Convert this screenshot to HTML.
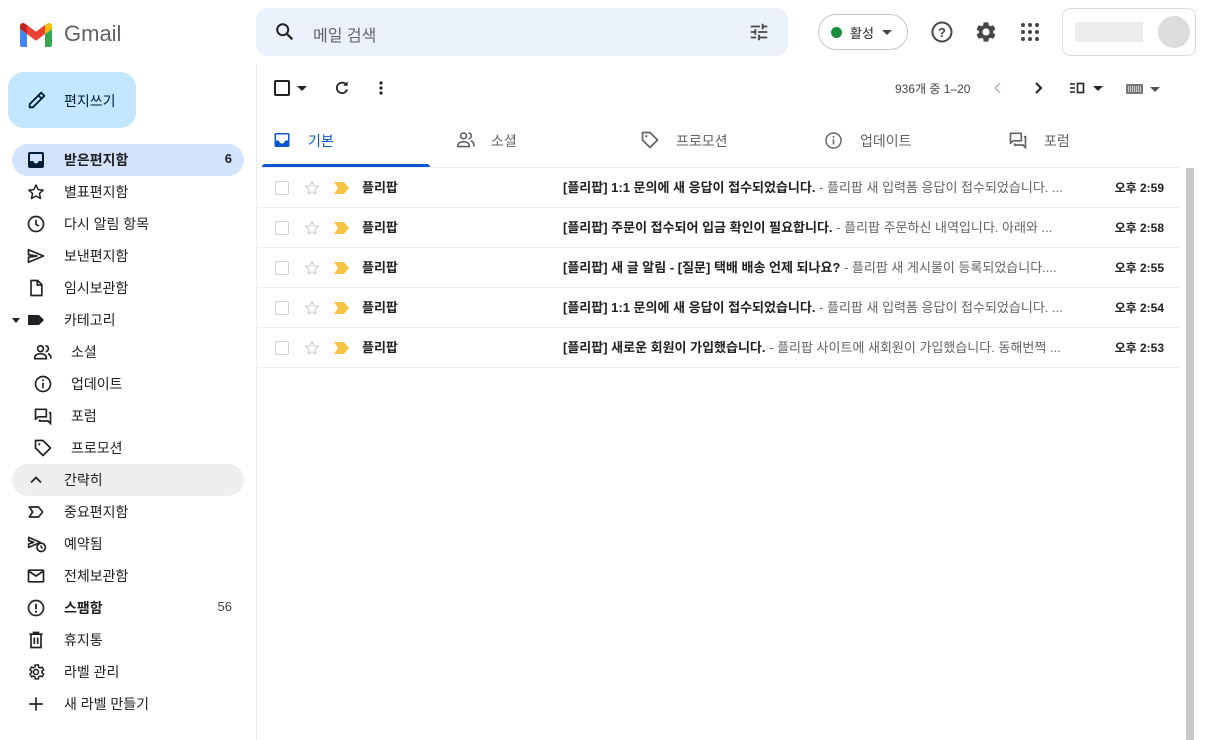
<!DOCTYPE html>
<html><head><meta charset="utf-8"><style>
*{margin:0;padding:0;box-sizing:border-box}
body{width:1212px;height:740px;overflow:hidden;background:#fff;font-family:"Liberation Sans","Noto Sans CJK KR",sans-serif;color:#202124;position:relative}
.a{position:absolute}
svg{display:block}
.nav{position:absolute;left:12px;width:232px;height:32px;border-radius:16px;font-size:14px;color:#202124}
.nav .ic{position:absolute;left:14px;top:6px}
.nav .t{position:absolute;left:52px;top:7px;line-height:18px}
.nav .n{position:absolute;right:12px;top:7px;font-size:13px}
.row{position:absolute;left:257px;width:923px;height:40px;border-bottom:1px solid #eceff1;font-size:13px}
.row .cb{position:absolute;left:18px;top:13px;width:14px;height:14px;border:1.5px solid #d2d2d2;border-radius:2px}
.row .st{position:absolute;left:46px;top:11px}
.row .im{position:absolute;left:77px;top:14px}
.row .snd{position:absolute;left:105px;top:11px;font-weight:bold;line-height:18px}
.row .sub{position:absolute;left:306px;top:11px;line-height:18px;white-space:nowrap}
.row .sub b{color:#202124}
.row .sub span{color:#5f6368}
.row .tm{position:absolute;right:16px;top:11px;font-weight:bold;font-size:12px;line-height:18px}
.tab{position:absolute;top:112px;height:55px;font-size:14px;color:#5f6368}
.tab .t{position:absolute;top:19px}
</style></head><body>

<!-- logo -->
<svg class="a" style="left:20px;top:23px" width="32" height="24" viewBox="0 0 32 24">
<path d="M2 24h5V11L0 6v16c0 1.1.9 2 2 2z" fill="#4285f4"/>
<path d="M25 24h5c1.1 0 2-.9 2-2V6l-7 5z" fill="#34a853"/>
<path d="M25 2v9l7-5V3c0-2.5-2.8-3.9-4.8-2.4z" fill="#fbbc04"/>
<path d="M7 11V2l9 6.8L25 2v9l-9 6.8z" fill="#ea4335"/>
<path d="M0 3v3l7 5V2L4.8.6C2.8-.9 0 .5 0 3z" fill="#c5221f"/>
</svg>
<div class="a" style="left:64px;top:21px;font-size:22px;color:#5f6368;letter-spacing:0">Gmail</div>

<!-- search -->
<div class="a" style="left:256px;top:8px;width:532px;height:48px;background:#eaf1fb;border-radius:12px"></div>
<svg class="a" style="left:274px;top:21px" width="22" height="22" viewBox="0 0 24 24"><circle cx="9.5" cy="9.5" r="6" fill="none" stroke="#202124" stroke-width="2.2"/><path d="M14 14l6 6" stroke="#202124" stroke-width="2.4"/></svg>
<div class="a" style="left:313px;top:22px;font-size:16px;color:#5f6368">메일 검색</div>
<svg class="a" style="left:748px;top:21px" width="22" height="22" viewBox="0 0 24 24" fill="#444746"><path d="M3 17v2h6v-2H3zM3 5v2h10V5H3zm10 16v-2h8v-2h-8v-2h-2v6h2zM7 9v2H3v2h4v2h2V9H7zm14 4v-2H11v2h10zm-6-4h2V7h4V5h-4V3h-2v6z"/></svg>

<!-- status -->
<div class="a" style="left:818px;top:14px;width:90px;height:36px;border:1px solid #c4c7c5;border-radius:18px"></div>
<div class="a" style="left:831px;top:27px;width:11px;height:11px;border-radius:50%;background:#1e8e3e"></div>
<div class="a" style="left:850px;top:23px;font-size:13px">활성</div>
<div class="a" style="left:882px;top:30px;width:0;height:0;border-left:5px solid transparent;border-right:5px solid transparent;border-top:5px solid #444"></div>
<svg class="a" style="left:930px;top:20px" width="24" height="24" viewBox="0 0 24 24"><circle cx="12" cy="12" r="9.5" fill="none" stroke="#444746" stroke-width="2"/><text x="12" y="17" font-size="13" text-anchor="middle" fill="#444746" font-family="Liberation Sans" font-weight="bold">?</text></svg>
<svg class="a" style="left:974px;top:20px" width="24" height="24" viewBox="0 0 24 24"><path fill="#444746" d="M19.14 12.94c.04-.3.06-.61.06-.94 0-.32-.02-.64-.07-.94l2.03-1.58a.49.49 0 00.12-.61l-1.92-3.32a.488.488 0 00-.59-.22l-2.39.96c-.5-.38-1.03-.7-1.62-.94l-.36-2.54a.484.484 0 00-.48-.41h-3.84c-.24 0-.43.17-.47.41l-.36 2.54c-.59.24-1.13.57-1.62.94l-2.39-.96c-.22-.08-.47 0-.59.22L2.74 8.87c-.12.21-.08.47.12.61l2.03 1.58c-.05.3-.09.63-.09.94s.02.64.07.94l-2.03 1.58a.49.49 0 00-.12.61l1.92 3.32c.12.22.37.29.59.22l2.39-.96c.5.38 1.03.7 1.62.94l.36 2.54c.05.24.24.41.48.41h3.84c.24 0 .44-.17.47-.41l.36-2.54c.59-.24 1.13-.56 1.62-.94l2.39.96c.22.08.47 0 .59-.22l1.92-3.32c.12-.22.07-.47-.12-.61l-2.01-1.58zM12 15.6A3.6 3.6 0 1112 8.4a3.6 3.6 0 010 7.2z"/></svg>
<svg class="a" style="left:1019px;top:21px" width="22" height="22" viewBox="0 0 22 22" fill="#444746"><circle cx="4" cy="4" r="2"/><circle cx="11" cy="4" r="2"/><circle cx="18" cy="4" r="2"/><circle cx="4" cy="11" r="2"/><circle cx="11" cy="11" r="2"/><circle cx="18" cy="11" r="2"/><circle cx="4" cy="18" r="2"/><circle cx="11" cy="18" r="2"/><circle cx="18" cy="18" r="2"/></svg>
<div class="a" style="left:1062px;top:8px;width:134px;height:48px;border:1px solid #dadce0;border-radius:8px"></div>
<div class="a" style="left:1075px;top:22px;width:68px;height:20px;background:#ececec"></div>
<div class="a" style="left:1158px;top:16px;width:32px;height:32px;border-radius:50%;background:#dcdcdc"></div>

<!-- compose -->
<div class="a" style="left:8px;top:72px;width:128px;height:56px;background:#c2e7ff;border-radius:16px"></div>
<svg class="a" style="left:26px;top:89px" width="22" height="22" viewBox="0 0 24 24"><path d="M4 20v-3.5L16.5 4l3.5 3.5L7.5 20H4z" fill="none" stroke="#001d35" stroke-width="2" stroke-linejoin="round"/><path d="M13.5 7l3.5 3.5" stroke="#001d35" stroke-width="2"/></svg>
<div class="a" style="left:64px;top:91px;font-size:14px;color:#001d35">편지쓰기</div>

<!-- nav -->
<div class="nav" style="top:144px;background:#d3e3fd;font-weight:bold"><svg class="ic" width="20" height="20" viewBox="0 0 20 20"><rect x="2" y="2" width="16" height="16" rx="2" fill="#001d35"/><path d="M4 4h12v7h-3.5a2.5 2.5 0 01-5 0H4z" fill="#d3e3fd"/></svg><span class="t">받은편지함</span><span class="n" style="font-weight:bold">6</span></div>
<div class="nav" style="top:176px"><svg class="ic" width="20" height="20" viewBox="0 0 24 24"><path d="M12 3.5l2.6 5.6 6 .6-4.5 4.1 1.3 6L12 16.8l-5.4 3 1.3-6L3.4 9.7l6-.6z" fill="none" stroke="#202124" stroke-width="1.8" stroke-linejoin="round"/></svg><span class="t">별표편지함</span></div>
<div class="nav" style="top:208px"><svg class="ic" width="20" height="20" viewBox="0 0 24 24"><circle cx="12" cy="12" r="9" fill="none" stroke="#202124" stroke-width="2"/><path d="M12 7v5.5l3.5 2" fill="none" stroke="#202124" stroke-width="2"/></svg><span class="t">다시 알림 항목</span></div>
<div class="nav" style="top:240px"><svg class="ic" width="20" height="20" viewBox="0 0 24 24"><path d="M3 4.5l18 7.5-18 7.5v-6l10-1.5-10-1.5z" fill="none" stroke="#202124" stroke-width="2" stroke-linejoin="round"/></svg><span class="t">보낸편지함</span></div>
<div class="nav" style="top:272px"><svg class="ic" width="20" height="20" viewBox="0 0 24 24"><path d="M6 3h8l5 5v13H6z" fill="none" stroke="#202124" stroke-width="2" stroke-linejoin="round"/><path d="M13.5 3v5.5H19" fill="none" stroke="#202124" stroke-width="2"/></svg><span class="t">임시보관함</span></div>
<div class="nav" style="top:304px"><div class="a" style="left:0;top:14px;border-left:4px solid transparent;border-right:4px solid transparent;border-top:5px solid #202124"></div><svg class="ic" width="20" height="20" viewBox="0 0 20 20"><path d="M2 5h11l5 5-5 5H2z" fill="#202124"/></svg><span class="t">카테고리</span></div>
<div class="nav" style="top:336px"><svg class="ic" style="left:21px" width="20" height="20" viewBox="0 0 24 24"><circle cx="9" cy="8" r="3.5" fill="none" stroke="#202124" stroke-width="2"/><path d="M2 19c0-3 3-5 7-5s7 2 7 5v1H2z" fill="none" stroke="#202124" stroke-width="2"/><path d="M15 4.5a3.5 3.5 0 010 7M18 14c2 .8 3.5 2.3 3.5 5v1" fill="none" stroke="#202124" stroke-width="2"/></svg><span class="t" style="left:59px">소셜</span></div>
<div class="nav" style="top:368px"><svg class="ic" style="left:21px" width="20" height="20" viewBox="0 0 24 24"><circle cx="12" cy="12" r="9" fill="none" stroke="#202124" stroke-width="2"/><path d="M12 10.5V17" stroke="#202124" stroke-width="2"/><circle cx="12" cy="7.5" r="1.2" fill="#202124"/></svg><span class="t" style="left:59px">업데이트</span></div>
<div class="nav" style="top:400px"><svg class="ic" style="left:21px" width="20" height="20" viewBox="0 0 24 24"><path d="M3 4h13v9H6l-3 3z" fill="none" stroke="#202124" stroke-width="2" stroke-linejoin="round"/><path d="M19 8h2v13l-3-3H8v-2" fill="none" stroke="#202124" stroke-width="2"/></svg><span class="t" style="left:59px">포럼</span></div>
<div class="nav" style="top:432px"><svg class="ic" style="left:21px" width="20" height="20" viewBox="0 0 24 24"><path d="M3 3h9l9 9-9 9-9-9z" fill="none" stroke="#202124" stroke-width="2" stroke-linejoin="round" transform="rotate(0)"/><circle cx="7.5" cy="7.5" r="1.3" fill="#202124"/></svg><span class="t" style="left:59px">프로모션</span></div>
<div class="nav" style="top:464px;background:#eeeeee"><svg class="ic" width="20" height="20" viewBox="0 0 24 24"><path d="M6 15l6-6 6 6" fill="none" stroke="#202124" stroke-width="2.2"/></svg><span class="t">간략히</span></div>
<div class="nav" style="top:496px"><svg class="ic" width="20" height="20" viewBox="0 0 24 24"><path d="M4 6h11l5 6-5 6H4l4-6z" fill="none" stroke="#202124" stroke-width="2" stroke-linejoin="round"/></svg><span class="t">중요편지함</span></div>
<div class="nav" style="top:528px"><svg class="ic" width="22" height="20" viewBox="0 0 26 24"><path d="M3 4l14 6-14 6v-4l6-2-6-2z" fill="none" stroke="#202124" stroke-width="2" stroke-linejoin="round"/><circle cx="18" cy="16" r="5" fill="#fff" stroke="#202124" stroke-width="2"/><path d="M18 13.5V16l1.8 1.2" fill="none" stroke="#202124" stroke-width="1.6"/></svg><span class="t">예약됨</span></div>
<div class="nav" style="top:560px"><svg class="ic" width="20" height="20" viewBox="0 0 24 24"><rect x="3" y="5" width="18" height="14" rx="1" fill="none" stroke="#202124" stroke-width="2"/><path d="M3 6l9 6 9-6" fill="none" stroke="#202124" stroke-width="2"/></svg><span class="t">전체보관함</span></div>
<div class="nav" style="top:592px;font-weight:bold"><svg class="ic" width="20" height="20" viewBox="0 0 24 24"><circle cx="12" cy="12" r="9" fill="none" stroke="#202124" stroke-width="2"/><path d="M12 7v6.5" stroke="#202124" stroke-width="2.2"/><circle cx="12" cy="16.5" r="1.3" fill="#202124"/></svg><span class="t">스팸함</span><span class="n" style="font-weight:normal;color:#444">56</span></div>
<div class="nav" style="top:624px"><svg class="ic" width="20" height="20" viewBox="0 0 24 24"><path d="M4 5h16M9 5V3h6v2M6 5v16h12V5" fill="none" stroke="#202124" stroke-width="2"/><path d="M10 9v8M14 9v8" stroke="#202124" stroke-width="2"/></svg><span class="t">휴지통</span></div>
<div class="nav" style="top:656px"><svg class="ic" width="20" height="20" viewBox="0 0 24 24"><path fill="none" stroke="#202124" stroke-width="1.8" d="M19.14 12.94c.04-.3.06-.61.06-.94s-.02-.64-.07-.94l2.03-1.58-1.92-3.32-2.39.96c-.5-.38-1.03-.7-1.62-.94L14.87 3.6h-3.84l-.36 2.54c-.59.24-1.13.57-1.62.94l-2.39-.96-1.92 3.32 2.03 1.58c-.05.3-.09.63-.09.94s.02.64.07.94l-2.03 1.58 1.92 3.32 2.39-.96c.5.38 1.03.7 1.62.94l.36 2.54h3.84l.36-2.54c.59-.24 1.13-.56 1.62-.94l2.39.96 1.92-3.32z"/><circle cx="12" cy="12" r="3" fill="none" stroke="#202124" stroke-width="1.8"/></svg><span class="t">라벨 관리</span></div>
<div class="nav" style="top:688px"><svg class="ic" width="20" height="20" viewBox="0 0 24 24"><path d="M12 4v16M4 12h16" stroke="#202124" stroke-width="2"/></svg><span class="t">새 라벨 만들기</span></div>

<!-- main panel -->
<div class="a" style="left:256px;top:64px;width:1px;height:676px;background:#eceff1"></div>
<div class="a" style="left:274px;top:80px;width:16px;height:16px;border:2px solid #202124;border-radius:2px"></div>
<div class="a" style="left:297px;top:86px;border-left:5px solid transparent;border-right:5px solid transparent;border-top:5px solid #202124"></div>
<svg class="a" style="left:333px;top:79px" width="18" height="18" viewBox="0 0 24 24"><path d="M18 8a7 7 0 10.8 6" fill="none" stroke="#202124" stroke-width="2.4"/><path d="M19.5 3v6h-6z" fill="#202124"/></svg>
<svg class="a" style="left:372px;top:79px" width="18" height="18" viewBox="0 0 18 18" fill="#202124"><circle cx="9" cy="4" r="1.6"/><circle cx="9" cy="9" r="1.6"/><circle cx="9" cy="14" r="1.6"/></svg>
<div class="a" style="left:895px;top:80px;font-size:12px;color:#444">936개 중 1–20</div>
<svg class="a" style="left:991px;top:80px" width="14" height="16" viewBox="0 0 14 16"><path d="M9 3L4 8l5 5" fill="none" stroke="#bbb" stroke-width="1.6"/></svg>
<svg class="a" style="left:1031px;top:80px" width="14" height="16" viewBox="0 0 14 16"><path d="M5 3l5 5-5 5" fill="none" stroke="#202124" stroke-width="2"/></svg>
<svg class="a" style="left:1069px;top:82px" width="16" height="12" viewBox="0 0 16 12"><path d="M1 2h5M1 6h5M1 10h5" stroke="#202124" stroke-width="1.6"/><rect x="8.5" y="1.5" width="6" height="9" fill="none" stroke="#202124" stroke-width="1.6"/></svg>
<div class="a" style="left:1093px;top:86px;border-left:5px solid transparent;border-right:5px solid transparent;border-top:5px solid #202124"></div>
<div class="a" style="left:1126px;top:84px;width:17px;height:10px;background:#777;border-radius:1px"><div style="margin:2px;height:6px;background:repeating-linear-gradient(90deg,#ccc 0 1px,#777 1px 2px)"></div></div>
<div class="a" style="left:1150px;top:87px;border-left:5px solid transparent;border-right:5px solid transparent;border-top:5px solid #555"></div>

<!-- tabs -->
<div class="tab" style="left:262px;width:168px;color:#0b57d0"><svg class="a" style="left:12px;top:20px" width="16" height="16" viewBox="0 0 16 16"><rect x="0.5" y="1" width="15" height="14" rx="1.5" fill="#0b57d0"/><path d="M2 2.5h12v6h-3a3 3 0 01-6 0H2z" fill="#fff"/></svg><span class="t" style="left:46px">기본</span><div class="a" style="left:0;bottom:0;width:168px;height:3px;background:#0b57d0;border-radius:3px 3px 0 0"></div></div>
<div class="tab" style="left:456px;width:160px"><svg class="a" style="left:0;top:19px" width="20" height="18" viewBox="0 0 24 22"><circle cx="9" cy="6" r="3.5" fill="none" stroke="#5f6368" stroke-width="2"/><path d="M2 18c0-3 3-5 7-5s7 2 7 5v1H2z" fill="none" stroke="#5f6368" stroke-width="2"/><path d="M15 2.5a3.5 3.5 0 010 7M18 12c2 .8 3.5 2.3 3.5 5v2" fill="none" stroke="#5f6368" stroke-width="2"/></svg><span class="t" style="left:35px">소셜</span></div>
<div class="tab" style="left:640px;width:160px"><svg class="a" style="left:0;top:18px" width="20" height="20" viewBox="0 0 24 24"><path d="M3 3h9l9 9-9 9-9-9z" fill="none" stroke="#5f6368" stroke-width="2" stroke-linejoin="round"/><circle cx="7.5" cy="7.5" r="1.3" fill="#5f6368"/></svg><span class="t" style="left:36px">프로모션</span></div>
<div class="tab" style="left:824px;width:160px"><svg class="a" style="left:0;top:19px" width="19" height="19" viewBox="0 0 24 24"><circle cx="12" cy="12" r="9.5" fill="none" stroke="#5f6368" stroke-width="1.8"/><path d="M12 10.5V17" stroke="#5f6368" stroke-width="2"/><circle cx="12" cy="7.5" r="1.2" fill="#5f6368"/></svg><span class="t" style="left:36px">업데이트</span></div>
<div class="tab" style="left:1008px;width:160px"><svg class="a" style="left:0;top:18px" width="20" height="20" viewBox="0 0 24 24"><path d="M3 4h13v9H6l-3 3z" fill="none" stroke="#5f6368" stroke-width="2" stroke-linejoin="round"/><path d="M19 8h2v13l-3-3H8v-2" fill="none" stroke="#5f6368" stroke-width="2"/></svg><span class="t" style="left:36px">포럼</span></div>
<div class="a" style="left:257px;top:167px;width:923px;height:1px;background:#eceff1"></div>

<!-- rows -->
<div class="row" style="top:168px"><div class="cb"></div><svg class="st" width="18" height="18" viewBox="0 0 24 24"><path d="M12 3.5l2.6 5.6 6 .6-4.5 4.1 1.3 6L12 16.8l-5.4 3 1.3-6L3.4 9.7l6-.6z" fill="none" stroke="#d0d0d0" stroke-width="1.6" stroke-linejoin="round"/></svg><svg class="im" width="16" height="12" viewBox="0 0 16 12"><path d="M0 0h10l5 6-5 6H0l4-6z" fill="#f6c344"/></svg><span class="snd">플리팝</span><span class="sub"><b>[플리팝] 1:1 문의에 새 응답이 접수되었습니다.</b><span> - 플리팝 새 입력폼 응답이 접수되었습니다. ...</span></span><span class="tm">오후 2:59</span></div>
<div class="row" style="top:208px"><div class="cb"></div><svg class="st" width="18" height="18" viewBox="0 0 24 24"><path d="M12 3.5l2.6 5.6 6 .6-4.5 4.1 1.3 6L12 16.8l-5.4 3 1.3-6L3.4 9.7l6-.6z" fill="none" stroke="#d0d0d0" stroke-width="1.6" stroke-linejoin="round"/></svg><svg class="im" width="16" height="12" viewBox="0 0 16 12"><path d="M0 0h10l5 6-5 6H0l4-6z" fill="#f6c344"/></svg><span class="snd">플리팝</span><span class="sub"><b>[플리팝] 주문이 접수되어 입금 확인이 필요합니다.</b><span> - 플리팝 주문하신 내역입니다. 아래와 ...</span></span><span class="tm">오후 2:58</span></div>
<div class="row" style="top:248px"><div class="cb"></div><svg class="st" width="18" height="18" viewBox="0 0 24 24"><path d="M12 3.5l2.6 5.6 6 .6-4.5 4.1 1.3 6L12 16.8l-5.4 3 1.3-6L3.4 9.7l6-.6z" fill="none" stroke="#d0d0d0" stroke-width="1.6" stroke-linejoin="round"/></svg><svg class="im" width="16" height="12" viewBox="0 0 16 12"><path d="M0 0h10l5 6-5 6H0l4-6z" fill="#f6c344"/></svg><span class="snd">플리팝</span><span class="sub"><b>[플리팝] 새 글 알림 - [질문] 택배 배송 언제 되나요?</b><span> - 플리팝 새 게시물이 등록되었습니다....</span></span><span class="tm">오후 2:55</span></div>
<div class="row" style="top:288px"><div class="cb"></div><svg class="st" width="18" height="18" viewBox="0 0 24 24"><path d="M12 3.5l2.6 5.6 6 .6-4.5 4.1 1.3 6L12 16.8l-5.4 3 1.3-6L3.4 9.7l6-.6z" fill="none" stroke="#d0d0d0" stroke-width="1.6" stroke-linejoin="round"/></svg><svg class="im" width="16" height="12" viewBox="0 0 16 12"><path d="M0 0h10l5 6-5 6H0l4-6z" fill="#f6c344"/></svg><span class="snd">플리팝</span><span class="sub"><b>[플리팝] 1:1 문의에 새 응답이 접수되었습니다.</b><span> - 플리팝 새 입력폼 응답이 접수되었습니다. ...</span></span><span class="tm">오후 2:54</span></div>
<div class="row" style="top:328px"><div class="cb"></div><svg class="st" width="18" height="18" viewBox="0 0 24 24"><path d="M12 3.5l2.6 5.6 6 .6-4.5 4.1 1.3 6L12 16.8l-5.4 3 1.3-6L3.4 9.7l6-.6z" fill="none" stroke="#d0d0d0" stroke-width="1.6" stroke-linejoin="round"/></svg><svg class="im" width="16" height="12" viewBox="0 0 16 12"><path d="M0 0h10l5 6-5 6H0l4-6z" fill="#f6c344"/></svg><span class="snd">플리팝</span><span class="sub"><b>[플리팝] 새로운 회원이 가입했습니다.</b><span> - 플리팝 사이트에 새회원이 가입했습니다. 동해번쩍 ...</span></span><span class="tm">오후 2:53</span></div>

<!-- scrollbar -->
<div class="a" style="left:1186px;top:168px;width:8px;height:572px;background:#c8c8c8"></div>
</body></html>
